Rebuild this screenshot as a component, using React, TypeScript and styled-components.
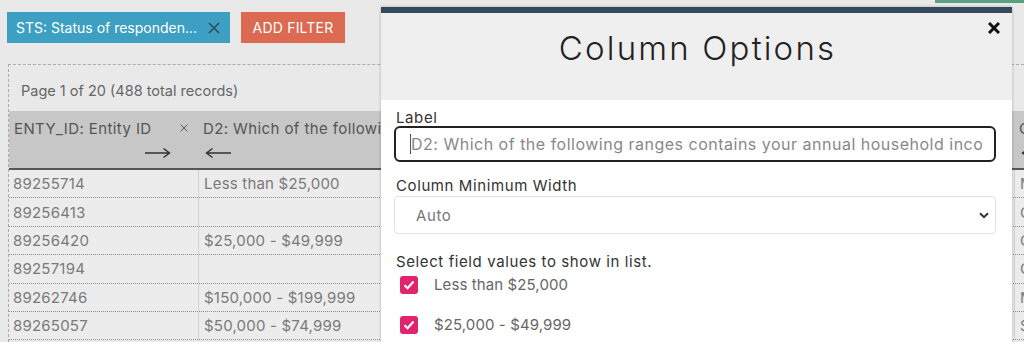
import React from 'react';
import styled, { createGlobalStyle } from 'styled-components';

const GlobalStyle = createGlobalStyle`
	html, body {
		margin: 0;
		padding: 0;
		background: #e9e9e9;
		font-family: Inter, "Noto Sans", sans-serif;
	}
`;

const Page = styled.div`
	position: relative;
	width: 1024px;
	height: 342px;
	overflow: hidden;
	background: #e9e9e9;
	display: flex;
	flex-direction: column;
`;

const TopStrip = styled.div`
	height: 3px;
	display: flex;
	justify-content: flex-end;
`;

const TopButtonEdge = styled.div`
	width: 89px;
	background: #5a9f83;
`;

const FilterBar = styled.div`
	display: flex;
	gap: 11px;
	height: 31px;
	margin: 9px 0 0 7px;
`;

const FilterChip = styled.div`
	width: 223px;
	box-sizing: border-box;
	padding: 0 10px 0 9px;
	display: flex;
	align-items: center;
	justify-content: space-between;
	background: #3d9fc2;
	color: #fff;
	font-size: 14px;
`;

const AddFilter = styled.div`
	width: 104px;
	display: flex;
	align-items: center;
	justify-content: center;
	background: #dc6a50;
	color: #fff;
	font-size: 14px;
	letter-spacing: 0.2px;
`;

const Panel = styled.div`
	flex: 1;
	margin: 21px 0 0 8px;
	border-top: 1px dashed #ababab;
	border-left: 1px dashed #ababab;
	display: flex;
	flex-direction: column;
	min-width: 0;
`;

const PageInfo = styled.div`
	height: 46px;
	padding: 4px 0 0 12px;
	box-sizing: border-box;
	display: flex;
	align-items: center;
	font-size: 14.5px;
	color: #666;
`;

const HeaderRow = styled.div`
	display: flex;
	height: 59px;
	background: #c7c7c7;
	border-bottom: 2px solid #575757;
	box-sizing: border-box;
`;

const HeaderCell = styled.div<{ $w: number }>`
	flex: 0 0 ${p => p.$w}px;
	box-sizing: border-box;
	padding: 8px 10px 0 5px;
	display: flex;
	flex-direction: column;
	overflow: hidden;
`;

const HeaderTitle = styled.div`
	display: flex;
	justify-content: space-between;
	align-items: center;
	height: 18px;
	font-size: 15px;
	letter-spacing: 0.4px;
	color: #555;
	white-space: nowrap;
`;

const ArrowLine = styled.div<{ $side: 'left' | 'right' }>`
	display: flex;
	justify-content: ${p => (p.$side === 'right' ? 'flex-end' : 'flex-start')};
	padding: ${p => (p.$side === 'right' ? '0 17px 0 0' : '0 0 0 2px')};
	margin-top: 10px;
`;

const Row = styled.div`
	display: flex;
	height: 28.4px;
	border-bottom: 1px dotted #8c8c8c;
	box-sizing: border-box;
	background: #ececec;
`;

const Cell = styled.div<{ $w: number; $first?: boolean }>`
	flex: 0 0 ${p => p.$w}px;
	box-sizing: border-box;
	padding-left: ${p => (p.$first ? 4 : 5)}px;
	border-left: ${p => (p.$first ? 'none' : '1px solid #d2d2d2')};
	display: flex;
	align-items: center;
	font-size: 15px;
	letter-spacing: 0.2px;
	color: #7a7a7a;
	white-space: nowrap;
	overflow: hidden;
`;

const Modal = styled.div`
	position: absolute;
	left: 381px;
	top: 7px;
	width: 631px;
	bottom: -40px;
	border-top: 6px solid #35495d;
	background: #fff;
	box-shadow: 0 0 3px rgba(0, 0, 0, 0.25);
	display: flex;
	flex-direction: column;
`;

const ModalHeader = styled.div`
	position: relative;
	height: 87px;
	background: #efefef;
	display: flex;
	justify-content: center;
	align-items: flex-start;
	padding-top: 17px;
	box-sizing: border-box;
`;

const ModalTitle = styled.h2`
	margin: 0 0 0 2px;
	font-size: 33px;
	line-height: 36px;
	font-weight: 300;
	letter-spacing: 2.2px;
	color: #222;
`;

const CloseButton = styled.div`
	position: absolute;
	top: 9px;
	right: 12px;
	width: 12px;
	height: 12px;
	display: flex;
`;

const ModalBody = styled.div`
	padding: 10px 16px 0 13px;
	display: flex;
	flex-direction: column;
`;

const FieldLabel = styled.div<{ $gap?: number }>`
	margin: ${p => p.$gap ?? 0}px 0 0 2px;
	font-size: 15px;
	letter-spacing: 0.6px;
	line-height: 16px;
	color: #333;
`;

const TextBox = styled.div`
	height: 36px;
	box-sizing: border-box;
	border: 2px solid #222;
	border-radius: 6px;
	padding: 0 12px 0 14px;
	display: flex;
	align-items: center;
	font-size: 16px;
	letter-spacing: 0.5px;
	color: #888;
`;

const TextValue = styled.span`
	flex: 1;
	min-width: 0;
	overflow: hidden;
	white-space: nowrap;
`;

const Caret = styled.span`
	flex: 0 0 1px;
	height: 20px;
	background: #555;
`;

const SelectBox = styled.div`
	height: 38px;
	margin-top: 2px;
	box-sizing: border-box;
	border: 1px solid #e2e2e2;
	border-radius: 4px;
	padding: 0 6px 0 21px;
	display: flex;
	align-items: center;
	justify-content: space-between;
	font-size: 15px;
	letter-spacing: 0.6px;
	color: #777;
`;

const CheckList = styled.div`
	display: flex;
	flex-direction: column;
	gap: 21px;
	margin-top: 5px;
`;

const CheckRow = styled.div`
	display: flex;
	align-items: center;
	gap: 16px;
	padding-left: 6px;
	font-size: 15px;
	letter-spacing: 0.1px;
	color: #666;
`;

const CheckBox = styled.div`
	width: 18px;
	height: 18px;
	border-radius: 3px;
	background: #e2246f;
	display: flex;
	align-items: center;
	justify-content: center;
`;

const columns = [
	{ w: 189, title: 'ENTY_ID: Entity ID', arrow: 'right' as const },
	{ w: 258, title: 'D2: Which of the following ranges contains your annual household income?', arrow: 'left' as const },
	{ w: 270, title: 'D3: Age group', arrow: 'left' as const },
	{ w: 288, title: 'D4: Region', arrow: 'left' as const },
	{ w: 220, title: 'C1: Current marital status', arrow: 'left' as const },
];

const rows = [
	['89255714', 'Less than $25,000', '35 - 44', 'Midwest', 'Married'],
	['89256413', '', '55 - 64', 'South', 'Cohabiting'],
	['89256420', '$25,000 - $49,999', '25 - 34', 'West', 'Cohabiting'],
	['89257194', '', '45 - 54', 'Northeast', 'Cohabiting'],
	['89262746', '$150,000 - $199,999', '35 - 44', 'South', 'Married'],
	['89265057', '$50,000 - $74,999', '18 - 24', 'West', 'Single'],
];

const Arrow = ({ dir }: { dir: 'left' | 'right' }) => (
	<svg width="27" height="12" viewBox="0 0 27 12">
		{dir === 'right' ? (
			<path d="M1 6 H25.5 M19.5 1.5 L25.5 6 L19.5 10.5" stroke="#333" strokeWidth="1.5" fill="none" />
		) : (
			<path d="M26 6 H1.5 M7.5 1.5 L1.5 6 L7.5 10.5" stroke="#333" strokeWidth="1.5" fill="none" />
		)}
	</svg>
);

const SmallX = ({ color, size, stroke }: { color: string; size: number; stroke: number }) => (
	<svg width={size} height={size} viewBox="0 0 12 12">
		<path d="M1 1 L11 11 M11 1 L1 11" stroke={color} strokeWidth={stroke} fill="none" />
	</svg>
);

const App = () => {
	return (
		<Page>
			<GlobalStyle />
			<TopStrip>
				<TopButtonEdge />
			</TopStrip>
			<FilterBar>
				<FilterChip>
					<span>STS: Status of responden...</span>
					<SmallX color="#2d4e5e" size={12} stroke={1.6} />
				</FilterChip>
				<AddFilter>ADD FILTER</AddFilter>
			</FilterBar>
			<Panel>
				<PageInfo>Page 1 of 20 (488 total records)</PageInfo>
				<HeaderRow>
					{columns.map((c, i) => (
						<HeaderCell key={i} $w={c.w}>
							<HeaderTitle>
								<span>{c.title}</span>
								{i === 0 && <SmallX color="#555" size={8} stroke={1.4} />}
							</HeaderTitle>
							<ArrowLine $side={c.arrow}>
								<Arrow dir={c.arrow} />
							</ArrowLine>
						</HeaderCell>
					))}
				</HeaderRow>
				{rows.map((r, ri) => (
					<Row key={ri}>
						{r.map((v, ci) => (
							<Cell key={ci} $w={columns[ci].w} $first={ci === 0}>
								{v}
							</Cell>
						))}
					</Row>
				))}
			</Panel>

			<Modal>
				<ModalHeader>
					<ModalTitle>Column Options</ModalTitle>
					<CloseButton>
						<SmallX color="#111" size={12} stroke={3} />
					</CloseButton>
				</ModalHeader>
				<ModalBody>
					<FieldLabel>Label</FieldLabel>
					<TextBox>
						<Caret />
						<TextValue>D2: Which of the following ranges contains your annual household income?</TextValue>
					</TextBox>
					<FieldLabel $gap={16}>Column Minimum Width</FieldLabel>
					<SelectBox>
						<span>Auto</span>
						<svg width="10" height="7" viewBox="0 0 10 7">
							<path d="M1 1.2 L5 5.2 L9 1.2" stroke="#333" strokeWidth="2" fill="none" />
						</svg>
					</SelectBox>
					<FieldLabel $gap={20}>Select field values to show in list.</FieldLabel>
					<CheckList>
						{['Less than $25,000', '$25,000 - $49,999'].map(v => (
							<CheckRow key={v}>
								<CheckBox>
									<svg width="12" height="10" viewBox="0 0 12 10">
										<path d="M1.5 5.2 L4.6 8.2 L10.5 1.5" stroke="#fff" strokeWidth="2.2" fill="none" />
									</svg>
								</CheckBox>
								<span>{v}</span>
							</CheckRow>
						))}
					</CheckList>
				</ModalBody>
			</Modal>
		</Page>
	);
};

export default App;
